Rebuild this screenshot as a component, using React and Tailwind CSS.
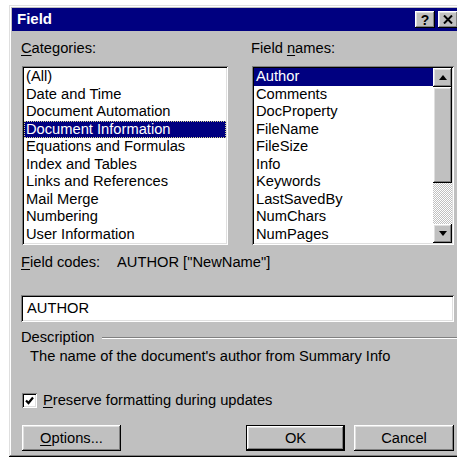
import React from 'react';

const categories = [
  '(All)',
  'Date and Time',
  'Document Automation',
  'Document Information',
  'Equations and Formulas',
  'Index and Tables',
  'Links and References',
  'Mail Merge',
  'Numbering',
  'User Information',
];

const fieldNames = [
  'Author',
  'Comments',
  'DocProperty',
  'FileName',
  'FileSize',
  'Info',
  'Keywords',
  'LastSavedBy',
  'NumChars',
  'NumPages',
];

const raised =
  'shadow-[inset_-1px_-1px_#000,inset_1px_1px_#fff,inset_-2px_-2px_#808080,inset_2px_2px_#dfdfdf]';
const sunken =
  'shadow-[inset_1px_1px_#808080,inset_-1px_-1px_#fff,inset_2px_2px_#000,inset_-2px_-2px_#dfdfdf]';

function Arrow({ down }) {
  return (
    <svg width="8" height="5" viewBox="0 0 8 5">
      {down ? <path d="M0 0h8L4 5z" fill="#000" /> : <path d="M0 5h8L4 0z" fill="#000" />}
    </svg>
  );
}

function ListBox({ items, selected, focused, scroll, width }) {
  return (
    <div className={`flex bg-white p-[2px] ${sunken}`} style={{ width }}>
      <div className="flex-1 min-w-0 flex flex-col">
        {items.map((it, i) => (
          <div
            key={it}
            className={`h-[17.5px] leading-[17.5px] pl-[2px] whitespace-nowrap ${
              i === selected ? 'bg-[#000080] text-white' : ''
            } ${i === selected && focused ? 'outline outline-1 outline-dotted outline-[#d8d890] -outline-offset-1' : ''}`}
          >
            {it}
          </div>
        ))}
      </div>
      {scroll && (
        <div className="w-[19px] flex flex-col">
          <div className={`h-[19px] bg-[#c0c0c0] flex items-center justify-center ${raised}`}>
            <Arrow />
          </div>
          <div className={`h-[96px] bg-[#c0c0c0] ${raised}`} />
          <div className="flex-1 bg-[repeating-conic-gradient(#c0c0c0_0_25%,#fff_0_50%)] [background-size:2px_2px]" />
          <div className={`h-[19px] bg-[#c0c0c0] flex items-center justify-center ${raised}`}>
            <Arrow down />
          </div>
        </div>
      )}
    </div>
  );
}

function Button({ children, isDefault, className = '' }) {
  return (
    <div className={`h-[26px] ${isDefault ? 'border border-black' : ''} ${className}`}>
      <div className={`h-full bg-[#c0c0c0] flex items-center justify-center ${raised}`}>{children}</div>
    </div>
  );
}

export default function App() {
  return (
    <div className="w-[457px] h-[459px] overflow-hidden bg-white pt-[5px] pl-[9px] font-['Liberation_Sans',Arial,sans-serif] text-[14.7px] text-black">
      <div className="w-[460px] h-[452px] bg-[#c0c0c0] p-[3px] shadow-[inset_-1px_-1px_#000,inset_1px_1px_#dfdfdf,inset_-2px_-2px_#808080,inset_2px_2px_#fff]">
        {/* title bar */}
        <div className="h-[23px] bg-[#000080] flex items-center justify-between pl-[5px] pr-[8px]">
          <span className="text-white font-bold text-[15px]">Field</span>
          <div className="flex gap-[3px]">
            <div className={`w-[20px] h-[17px] bg-[#c0c0c0] flex items-center justify-center font-bold text-[14px] leading-none ${raised}`}>
              ?
            </div>
            <div className={`w-[20px] h-[17px] bg-[#c0c0c0] flex items-center justify-center ${raised}`}>
              <svg width="10" height="9" viewBox="0 0 10 9">
                <path d="M1 0.5l8 8M9 0.5l-8 8" stroke="#000" strokeWidth="2" />
              </svg>
            </div>
          </div>
        </div>

        <div className="pl-[10px] pr-[12px]">
          <div className="flex gap-[24px] mt-[9px]">
            <div className="flex flex-col w-[206px]">
              <div className="h-[17px] leading-[17px] -ml-[1px]">
                <span className="underline underline-offset-2">C</span>ategories:
              </div>
              <div className="mt-[9px]">
                <ListBox items={categories} selected={3} focused width={206} />
              </div>
            </div>
            <div className="flex flex-col w-[202px]">
              <div className="h-[17px] leading-[17px] -ml-[1px]">
                Field <span className="underline underline-offset-2">n</span>ames:
              </div>
              <div className="mt-[9px]">
                <ListBox items={fieldNames} selected={0} scroll width={202} />
              </div>
            </div>
          </div>

          <div className="flex h-[17px] leading-[17px] mt-[9px] -ml-[1px]">
            <span className="w-[96px]">
              <span className="underline underline-offset-2">F</span>ield codes:
            </span>
            <span>AUTHOR ["NewName"]</span>
          </div>

          <div className={`h-[27px] mt-[24px] bg-white flex items-center pl-[6px] -ml-[1px] ${sunken}`}>AUTHOR</div>

          <div className="flex items-center h-[17px] mt-[7px] -ml-[1px]">
            <span>Description</span>
            <div className="flex-1 ml-[8px] -mr-[10px] border-t border-t-[#808080] border-b border-b-white" />
          </div>
          <div className="h-[17px] leading-[17px] mt-[2px] pl-[8px]">
            The name of the document's author from Summary Info
          </div>

          <div className="flex items-center h-[17px] mt-[27px]">
            <div className={`w-[15px] h-[15px] bg-white flex items-center justify-center ${sunken}`}>
              <svg width="9" height="9" viewBox="0 0 9 9">
                <path d="M1 4.5l2.5 2.5L8 1.5" stroke="#000" strokeWidth="2.2" fill="none" />
              </svg>
            </div>
            <span className="ml-[6px]">
              <span className="underline underline-offset-2">P</span>reserve formatting during updates
            </span>
          </div>

          <div className="flex mt-[16px]">
            <Button className="w-[99px]">
              <span>
                <span className="underline underline-offset-2">O</span>ptions...
              </span>
            </Button>
            <Button isDefault className="w-[99px] ml-[125px]">
              OK
            </Button>
            <Button className="w-[100px] ml-[9px]">Cancel</Button>
          </div>
        </div>
      </div>
    </div>
  );
}
